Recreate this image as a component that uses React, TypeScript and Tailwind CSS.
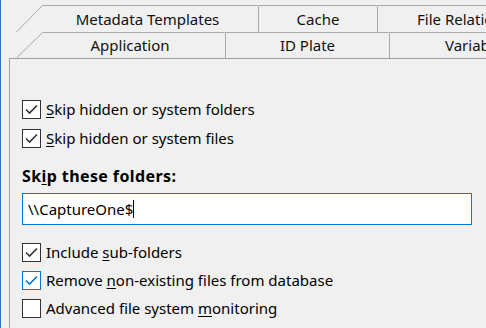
import React from 'react';

const font = { fontFamily: '"Noto Sans", "Open Sans", sans-serif' };

// slanted left edge of the first tab in each row
const Slant = ({ h }: { h: number }) => (
  <svg width="27" height={h} viewBox={`0 0 27 ${h}`} className="shrink-0 block">
    <line x1="0.5" y1={h} x2="26.5" y2="0.5" stroke="#a9a9a9" strokeWidth="1" />
  </svg>
);

const CheckBox = ({ checked, focused }: { checked?: boolean; focused?: boolean }) => (
  <div
    className={`w-[19px] h-[19px] shrink-0 bg-white border ${
      focused ? 'border-[#0078d7]' : 'border-[#333333]'
    }`}
  >
    {checked && (
      <svg width="17" height="17" viewBox="0 0 17 17" className="block">
        <polyline
          points="3,8.5 6.5,12 14,4.5"
          fill="none"
          stroke={focused ? '#0078d7' : '#333333'}
          strokeWidth="1.6"
        />
      </svg>
    )}
  </div>
);

const Option = ({
  pre,
  u,
  post,
  checked,
  focused,
}: {
  pre: string;
  u: string;
  post: string;
  checked?: boolean;
  focused?: boolean;
}) => (
  <div className="flex items-center h-[19px]">
    <CheckBox checked={checked} focused={focused} />
    <span className="ml-[5px] text-[15px] leading-[19px] text-black whitespace-nowrap">
      {pre}
      <span className="underline underline-offset-2">{u}</span>
      {post}
    </span>
  </div>
);

export default function App() {
  return (
    <div
      className="w-[486px] h-[328px] bg-[#f0f0f0] overflow-hidden border-l border-[#2b79c2] flex flex-col"
      style={font}
    >
      {/* Tab rows */}
      <div className="pt-[5px]">
        <div className="flex h-[27px] pl-[15px]">
          <Slant h={27} />
          <div className="w-[216px] shrink-0 border-t border-r border-[#a9a9a9] rounded-tr-[2px] flex items-center justify-center pr-[6px] text-[15px] text-[#111] whitespace-nowrap">
            Metadata Templates
          </div>
          <div className="w-[119px] shrink-0 border-t border-r border-[#a9a9a9] rounded-tr-[2px] flex items-center justify-center text-[15px] text-[#111]">
            Cache
          </div>
          <div className="flex-1 border-t border-[#a9a9a9] flex items-center pl-[39px] text-[15px] text-[#111] whitespace-nowrap">
            File Relations
          </div>
        </div>
        <div className="flex h-[26px] pl-[15px]">
          <Slant h={26} />
          <div className="w-[183px] shrink-0 border-t border-r border-[#a9a9a9] rounded-tr-[2px] flex items-center justify-center pr-[8px] text-[15px] text-[#111]">
            Application
          </div>
          <div className="w-[164px] shrink-0 border-t border-r border-[#a9a9a9] rounded-tr-[2px] flex items-center justify-center text-[15px] text-[#111]">
            ID Plate
          </div>
          <div className="flex-1 border-t border-[#a9a9a9] flex items-center pl-[55px] text-[15px] text-[#111] whitespace-nowrap">
            Variables
          </div>
        </div>
      </div>

      {/* Page body */}
      <div className="ml-[8px] flex-1 border-t border-l border-[#a0a0a0] pl-[12px] pt-[41px]">
        <div className="flex flex-col gap-[10px]">
          <Option pre="" u="S" post="kip hidden or system folders" checked />
          <Option pre="" u="S" post="kip hidden or system files" checked />
        </div>

        <div className="mt-[18px] text-[16px] leading-[21px] font-bold tracking-[0.4px] text-black">
          Sk<span className="underline underline-offset-2">i</span>p these folders:
        </div>
        <div className="mt-[6px] w-[450px] h-[32px] bg-white border border-[#0078d7] flex items-center pl-[5px] text-[15px] text-black">
          \\CaptureOne$<span className="inline-block w-px h-[18px] bg-black" />
        </div>

        <div className="mt-[18px] flex flex-col gap-[9px]">
          <Option pre="Include " u="s" post="ub-folders" checked />
          <Option pre="Remove " u="n" post="on-existing files from database" checked focused />
          <Option pre="Advanced file system " u="m" post="onitoring" />
        </div>
      </div>
    </div>
  );
}
